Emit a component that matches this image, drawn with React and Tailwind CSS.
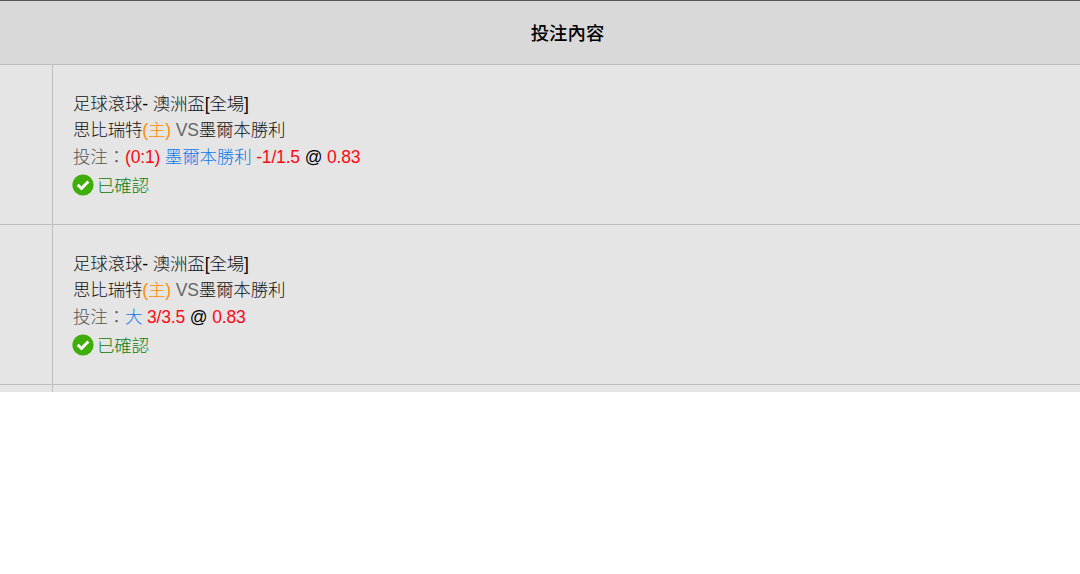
const bets = [
  { id: 1, score: "(0:1)", pick: "墨爾本勝利", handicap: "-1/1.5", odds: "0.83" },
  { id: 2, score: "", pick: "大", handicap: "3/3.5", odds: "0.83" },
];

const ConfirmedIcon = () => (
  <svg viewBox="0 0 22 22" className="size-[22px] shrink-0">
    <circle cx="11" cy="11" r="10.6" fill="#3fae0a" />
    <path d="M5.7 10.8l3.8 3.7 6.8-6.9" fill="none" stroke="#fff" strokeWidth="2.9" />
  </svg>
);

const BetRow = ({ bet }) => {
  return (
    <div className="flex h-40 border-b border-[#bdbdbd]">
      <div className="w-[53px] shrink-0 border-r border-[#bdbdbd]" />
      <div className="pt-[26px] pl-5 text-[17.5px] leading-[26px] font-light tracking-[-0.17px] whitespace-nowrap">
        <div className="text-[#111]">
          足球滾球<span className="text-black">-</span> 澳洲盃
          <span className="text-black">[</span>全場
          <span className="text-black">]</span>
        </div>
        <div className="text-[#111]">
          思比瑞特<span className="text-[#ff8c00]">(主)</span>{" "}
          <span className="text-[#666]">VS</span>墨爾本勝利
        </div>
        <div className="pt-px text-[#555]">
          投注：
          {bet.score && <span className="text-[#fa0a14]">{bet.score} </span>}
          <span className="text-[#0f78e8]">{bet.pick}</span>{" "}
          <span className="text-[#fa0a14]">{bet.handicap}</span>{" "}
          <span className="text-black">@</span>{" "}
          <span className="text-[#fa0a14]">{bet.odds}</span>
        </div>
        <div className="-ml-px flex h-[29px] items-center gap-[3px] text-[#0b800b]">
          <ConfirmedIcon />
          <span className="pt-[3px]">已確認</span>
        </div>
      </div>
    </div>
  );
};

export default function App() {
  return (
    <div className="h-[574px] overflow-hidden bg-white font-['Liberation_Sans','Noto_Sans_CJK_TC',sans-serif]">
      <div className="h-[392px] overflow-hidden bg-[#e5e5e5]">
        <div className="flex h-[65px] items-center border-t border-b border-t-[#555] border-b-[#bdbdbd] bg-[#d9d9d9]">
          <div className="w-[55px] shrink-0" />
          <div className="flex-1 pt-0.5 text-center text-[18.4px] font-medium text-black">
            投注內容
          </div>
        </div>
        {bets.map((bet) => (
          <BetRow key={bet.id} bet={bet} />
        ))}
        <div className="h-[7px] w-[53px] border-r border-[#bdbdbd]" />
      </div>
    </div>
  );
}
